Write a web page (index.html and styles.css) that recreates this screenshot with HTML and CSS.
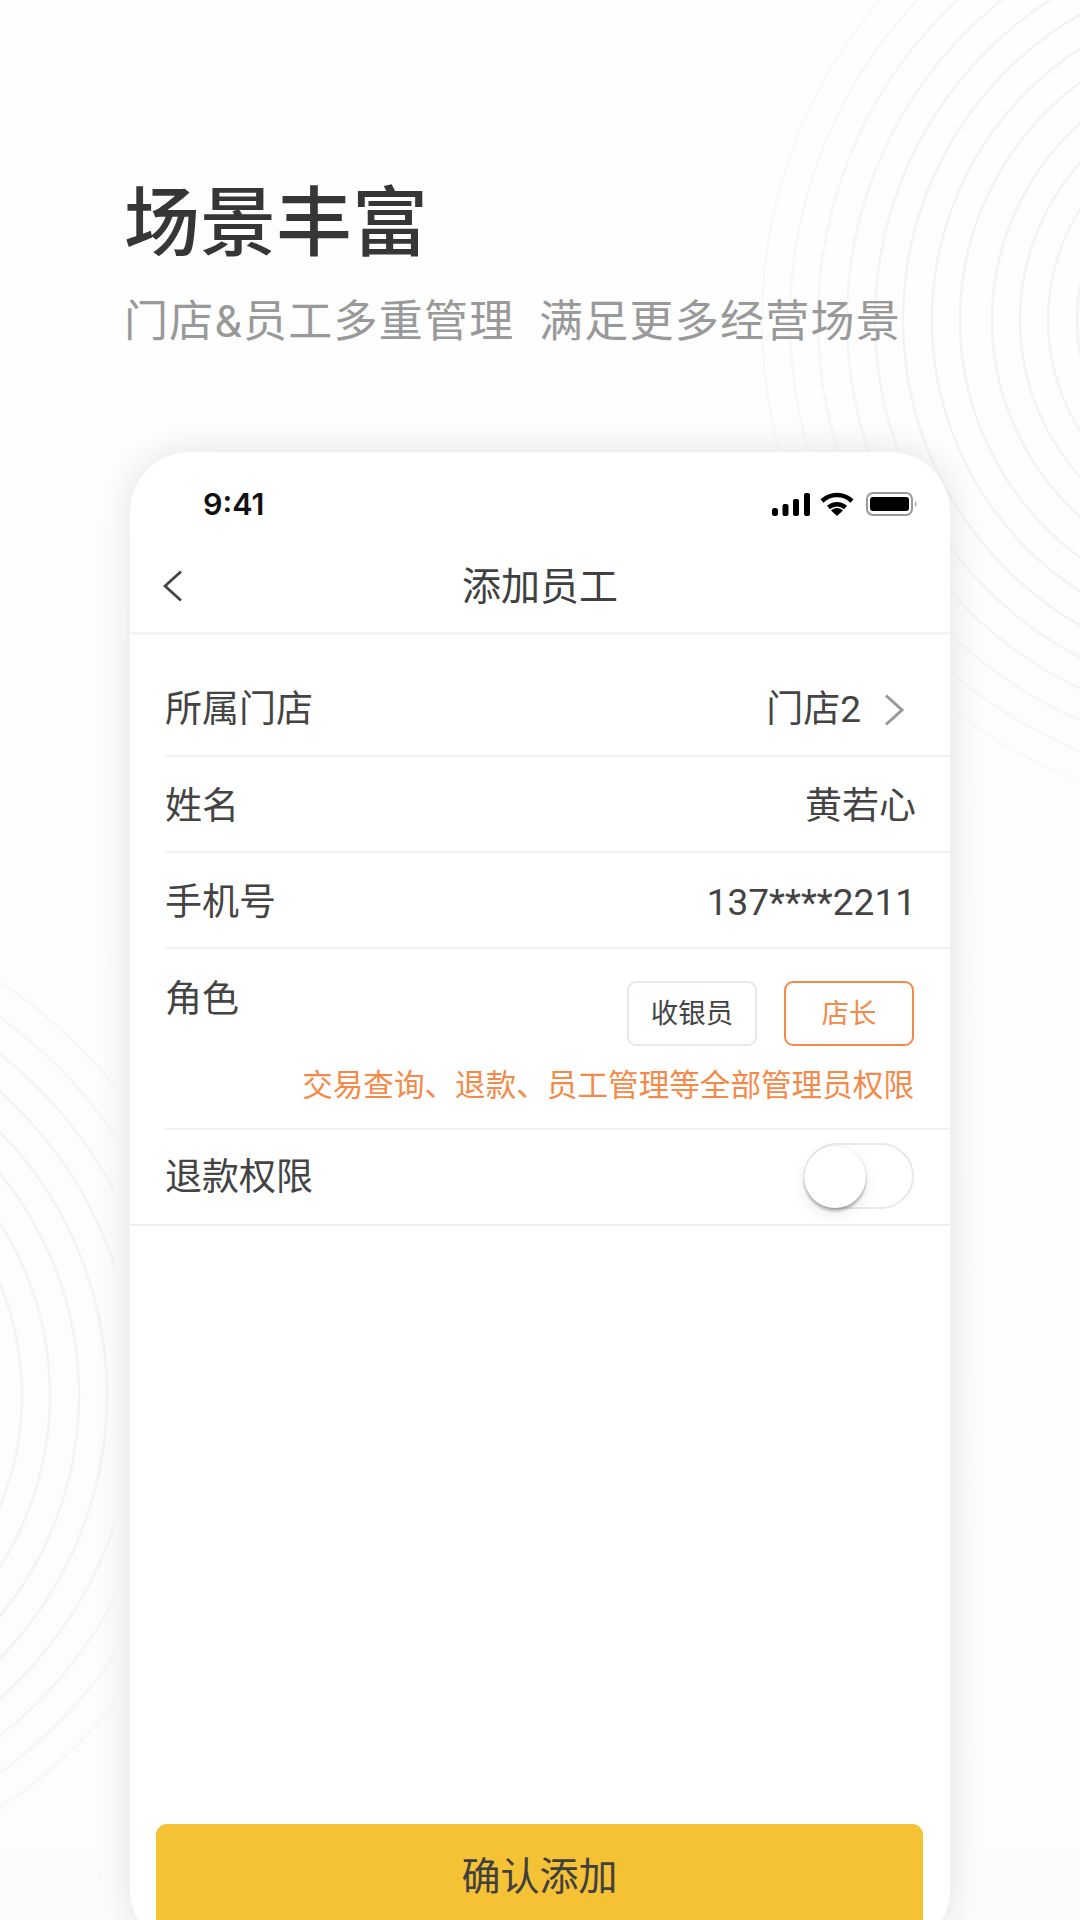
FILE: index.html
```html
<!DOCTYPE html>
<html lang="zh-CN">
<head>
<meta charset="utf-8">
<title>场景丰富</title>
<link rel="stylesheet" href="styles.css">
</head>
<body>
<div class="page">
  <svg class="rings rings-right" viewBox="0 0 340 860" aria-hidden="true">
    <g transform="translate(-740 0)" fill="none" stroke="#f3f3f3" stroke-width="2.500">
      <circle cx="1255" cy="320" r="178"/><circle cx="1255" cy="320" r="207"/>
      <circle cx="1255" cy="320" r="235"/><circle cx="1255" cy="320" r="263"/>
      <circle cx="1255" cy="320" r="295"/><circle cx="1255" cy="320" r="323"/>
      <circle cx="1255" cy="320" r="352"/>
      <circle cx="1255" cy="320" r="380" stroke="#f4f4f4"/><circle cx="1255" cy="320" r="408" stroke="#f5f5f5"/>
      <circle cx="1255" cy="320" r="437" stroke="#f6f6f6"/><circle cx="1255" cy="320" r="465" stroke="#f7f7f7"/>
      <circle cx="1255" cy="320" r="493" stroke="#f9f9f9"/>
    </g>
  </svg>
  <svg class="rings rings-left" viewBox="0 0 115 920" aria-hidden="true">
    <g transform="translate(0 -950)" fill="none" stroke="#f3f3f3" stroke-width="2.500">
      <circle cx="-270" cy="1395" r="292"/><circle cx="-270" cy="1395" r="320"/>
      <circle cx="-270" cy="1395" r="349"/><circle cx="-270" cy="1395" r="377"/>
      <circle cx="-270" cy="1395" r="406" stroke="#f4f4f4"/><circle cx="-270" cy="1395" r="435" stroke="#f5f5f5"/>
      <circle cx="-270" cy="1395" r="464" stroke="#f6f6f6"/><circle cx="-270" cy="1395" r="493" stroke="#f7f7f7"/>
    </g>
  </svg>

  <header class="hero">
    <h1 class="hero-title">场景丰富</h1>
    <p class="hero-sub">门店&amp;员工多重管理&nbsp;&nbsp;满足更多经营场景</p>
  </header>

  <section class="phone">
    <div class="status">
      <span class="clock">9:41</span>
      <div class="status-icons">
        <svg class="ic-signal" viewBox="0 0 38 23"><rect x="0" y="15" width="6" height="8" rx="2.5"/><rect x="10.5" y="11" width="6" height="12" rx="2"/><rect x="21" y="6" width="6" height="17" rx="2"/><rect x="32" y="0" width="6" height="23" rx="2"/></svg>
        <svg class="ic-wifi" viewBox="0 0 34 24"><path class="arc" d="M2 9 A 22 22 0 0 1 32 9"/><path class="arc" d="M8.500 15.500 A 12.500 12.500 0 0 1 25.500 15.500"/><path d="M17 24 L11 18.500 A 8.500 8.500 0 0 1 23 18.500 Z"/></svg>
        <svg class="ic-battery" viewBox="0 0 52 24"><rect class="batt-shell" x="1" y="1" width="45" height="22" rx="6"/><rect x="4" y="5" width="39" height="14" rx="3"/><path class="batt-nub" d="M49 9 C51 10 51 14 49 15 Z"/></svg>
      </div>
    </div>

    <nav class="navbar">
      <svg class="ic-back" viewBox="0 0 20 32"><path d="M18 1.500 L2 16 L18 30.500"/></svg>
      <span class="nav-title">添加员工</span>
    </nav>

    <div class="row row-first">
      <span>所属门店</span>
      <span class="value">门店2<svg class="ic-next" viewBox="0 0 20 32"><path d="M2 1.500 L18 16 L2 30.500"/></svg></span>
    </div>
    <div class="row"><span>姓名</span><span class="value">黄若心</span></div>
    <div class="row"><span>手机号</span><span class="value">137****2211</span></div>
    <div class="row-role">
      <div class="role-top">
        <span class="role-label">角色</span>
        <div class="tags"><span class="tag">收银员</span><span class="tag tag-on">店长</span></div>
      </div>
      <p class="role-desc">交易查询、退款、员工管理等全部管理员权限</p>
    </div>
    <div class="row row-last">
      <span>退款权限</span>
      <span class="switch"><span class="knob"></span></span>
    </div>

    <button class="confirm" type="button">确认添加</button>
  </section>
</div>
</body>
</html>
```
FILE: styles.css
```css
* { box-sizing: border-box; }
html, body { margin: 0; padding: 0; }
body { font-family: Roboto, "Noto Sans CJK SC", "Noto Sans", sans-serif; color: #444; }

.page {
  position: relative;
  width: 1080px;
  height: 1920px;
  overflow: hidden;
  background: linear-gradient(180deg, #fefefe 0%, #fcfcfc 100%);
}

.rings { position: absolute; display: block; }
.rings-right { left: 740px; top: 0; width: 340px; height: 860px; }
.rings-left { left: 0; top: 950px; width: 115px; height: 920px; }

.hero {
  position: relative;
  height: 452px;
  padding: 174px 0 0 124px;
}
.hero-title {
  margin: 0;
  font-size: 76px;
  line-height: 100px;
  font-weight: 500;
  color: #363636;
  letter-spacing: 0;
}
.hero-sub {
  margin: 0;
  font-size: 44px;
  line-height: 97px;
  color: #999;
  letter-spacing: 1.250px;
  white-space: nowrap;
}

.phone {
  position: relative;
  display: flex;
  flex-direction: column;
  width: 820px;
  height: 1498px;
  margin-left: 130px;
  background: #fff;
  border-radius: 60px;
  box-shadow: 0 0 36px #e2e2e2;
}

.status {
  display: flex;
  justify-content: space-between;
  align-items: center;
  height: 104px;
  padding: 0 32px 0 73px;
}
.clock {
  font-family: Inter, "Liberation Sans", sans-serif;
  font-size: 30.500px;
  font-weight: 600;
  line-height: 1;
  color: #111;
}
.status-icons { display: flex; align-items: center; gap: 10px; }
.status-icons svg { display: block; }
.ic-signal { width: 38px; height: 23px; fill: #000; }
.ic-wifi { width: 34px; height: 24px; fill: #000; margin-right: 2px; }
.ic-wifi .arc { fill: none; stroke: #000; stroke-width: 4.500; }
.ic-battery { width: 52px; height: 24px; fill: #000; }
.batt-shell { fill: none; stroke: #999; stroke-width: 2; }
.batt-nub { fill: #aaa; }

.navbar {
  position: relative;
  display: flex;
  justify-content: center;
  align-items: center;
  height: 79px;
  border-bottom: 3px solid #f4f4f4;
}
.ic-back {
  position: absolute;
  left: 33px;
  top: 14px;
  width: 20px;
  height: 32px;
  fill: none;
  stroke: #444;
  stroke-width: 2.800;
}
.nav-title { font-size: 39px; line-height: 1; color: #404040; font-weight: 400; padding-bottom: 14px; }

.row {
  display: flex;
  justify-content: space-between;
  align-items: center;
  height: 96px;
  margin-left: 35px;
  padding: 4px 34px 0 0;
  border-bottom: 2px solid #f2f2f2;
  font-size: 37px;
  line-height: 1;
}
.row-first { height: 122px; padding-top: 29px; }
.row-last { margin-left: 0; padding: 0 36px 0 35px; border-bottom-color: #efefef; }
.value { display: flex; align-items: center; }
.ic-next {
  width: 20px;
  height: 32px;
  margin-left: 23px;
  margin-right: 12px;
  fill: none;
  stroke: #999;
  stroke-width: 3;
}

.row-role {
  height: 181px;
  margin-left: 35px;
  padding-right: 36px;
  border-bottom: 2px solid #f2f2f2;
}
.role-top { display: flex; justify-content: space-between; }
.role-label { font-size: 37px; line-height: 1; padding-top: 32px; }
.tags { display: flex; gap: 27px; padding-top: 32px; }
.tag {
  display: flex;
  justify-content: center;
  align-items: center;
  width: 130px;
  height: 65px;
  border: 2px solid #e8e8e8;
  border-radius: 9px;
  font-size: 27.500px;
  line-height: 1;
  color: #444;
}
.tag-on { border-color: #f58a48; color: #f58a48; }
.role-desc {
  margin: 0;
  padding-top: 19px;
  text-align: right;
  font-size: 30.600px;
  line-height: 42px;
  color: #f58a48;
  white-space: nowrap;
}

.switch {
  position: relative;
  display: block;
  width: 110px;
  height: 66px;
  margin-top: -2px;
  border: 2px solid #e8e8e8;
  border-radius: 33px;
}
.knob {
  position: absolute;
  left: -2px;
  top: 1px;
  width: 62px;
  height: 62px;
  border-radius: 50%;
  background: #fff;
  box-shadow: 0 3px 3px rgba(0, 0, 0, .28), 0 6px 16px rgba(0, 0, 0, .08), 0 0 1px rgba(0, 0, 0, .2);
}

.confirm {
  display: block;
  width: 767px;
  height: 106px;
  margin: auto 0 20px 26px;
  padding: 0;
  border: 0;
  border-radius: 11px;
  background: #f5c135;
  font: inherit;
  font-size: 39px;
  line-height: 1;
  color: #404040;
}
```
